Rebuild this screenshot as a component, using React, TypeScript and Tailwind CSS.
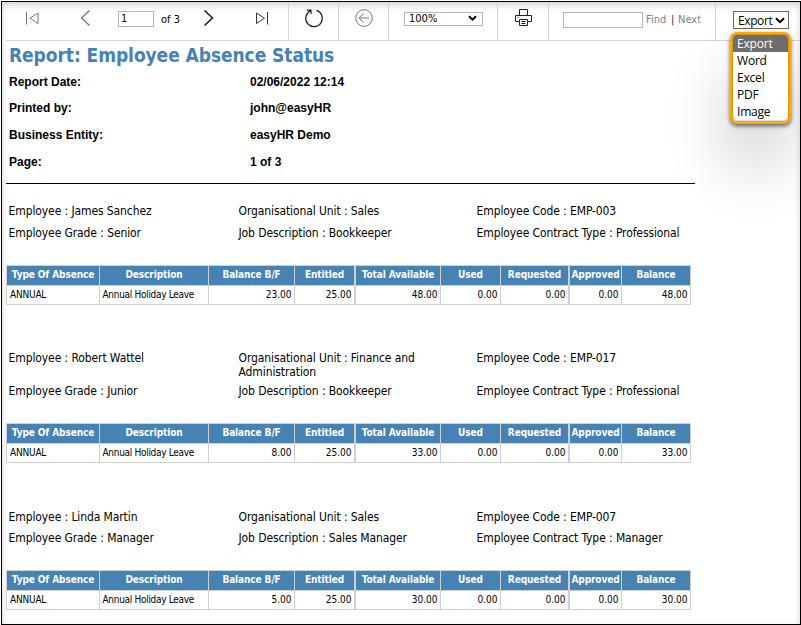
import type { ReactNode } from "react";

const tahoma = "font-['DejaVu_Sans_Condensed','DejaVu_Sans',sans-serif] [font-stretch:75%]";

interface Absence {
  name: string;
  grade: string;
  unit: string;
  job: string;
  code: string;
  contract: string;
  balances: string[];
  metaClass: string;
  gapClass: string;
}

const employees: Absence[] = [
  {
    name: "James Sanchez", grade: "Senior", unit: "Sales", job: "Bookkeeper", code: "EMP-003", contract: "Professional",
    balances: ["23.00", "25.00", "48.00", "0.00", "0.00", "0.00", "48.00"],
    metaClass: "h-[61px] grid-rows-[22px_14px]", gapClass: "h-[46px]",
  },
  {
    name: "Robert Wattel", grade: "Junior", unit: "Finance and Administration", job: "Bookkeeper", code: "EMP-017", contract: "Professional",
    balances: ["8.00", "25.00", "33.00", "0.00", "0.00", "0.00", "33.00"],
    metaClass: "h-[72px] grid-rows-[33px_14px]", gapClass: "h-[47px]",
  },
  {
    name: "Linda Martin", grade: "Manager", unit: "Sales", job: "Sales Manager", code: "EMP-007", contract: "Manager",
    balances: ["5.00", "25.00", "30.00", "0.00", "0.00", "0.00", "30.00"],
    metaClass: "h-[60px] grid-rows-[21px_14px]", gapClass: "h-0",
  },
];

const columns = [
  { label: "Type Of Absence", cls: "w-[92px] mr-px" },
  { label: "Description", cls: "w-[108px] mr-px" },
  { label: "Balance B/F", cls: "w-[85px] mr-px" },
  { label: "Entitled", cls: "w-[59px] mr-[2px]" },
  { label: "Total Available", cls: "w-[84px] mr-px" },
  { label: "Used", cls: "w-[59px] mr-px" },
  { label: "Requested", cls: "w-[67px] mr-[2px]" },
  { label: "Approved", cls: "w-[51px] mr-px" },
  { label: "Balance", cls: "w-[68px]" },
];

function Cell({ className, children }: { className: string; children?: ReactNode }) {
  return <div className={`flex h-[38px] shrink-0 items-center border-r border-[#d6d6d6] ${className}`}>{children}</div>;
}

function Toolbar() {
  return (
    <div className="flex h-[39px] items-start border-b border-[#d3d3d3] text-[11px]">
      <Cell className="w-[283px] pb-[7px]">
        <svg className="ml-[19px]" width="15" height="16" viewBox="0 0 15 16" fill="none" stroke="#777">
          <path d="M1.500 2v12.500M13 3v10.500L5 8.200z" />
        </svg>
        <svg className="ml-[40px]" width="11" height="18" viewBox="0 0 11 18" fill="none" stroke="#777" strokeWidth="1.3">
          <path d="M9.500 1.500L1.500 9l8 7.500" />
        </svg>
        <div className="ml-[27px] mt-[2px] flex h-[16px] w-[36px] items-center border border-[#b5b5b5] bg-white pl-[2px] pt-px">1</div>
        <span className="ml-[7px] mt-[5px] w-[20px] whitespace-nowrap">of 3</span>
        <svg className="ml-[22px]" width="11" height="18" viewBox="0 0 11 18" fill="none" stroke="#111" strokeWidth="1.4">
          <path d="M1.500 1.500L9.500 9l-8 7.500" />
        </svg>
        <svg className="ml-[41px]" width="15" height="16" viewBox="0 0 15 16" fill="none" stroke="#333">
          <path d="M1.500 3v10.500L9.500 8.200z" /><path d="M12.500 2v12.500" stroke="#33336a" />
        </svg>
      </Cell>
      <Cell className="w-[50px] justify-center pb-[7px]">
        <svg width="20" height="20" viewBox="0 0 20 20" fill="none" stroke="#222" strokeWidth="1.200">
          <path d="M12.500 2.400A8.300 8.300 0 1 1 6.500 2.800M2.800 2.200H7V6" />
        </svg>
      </Cell>
      <Cell className="w-[50px] justify-center pb-[7px]">
        <svg width="20" height="20" viewBox="0 0 20 20" fill="none" stroke="#777">
          <circle cx="10" cy="10" r="8.300" /><path d="M15 10H5.500M9.500 5.500L5 10l4.500 4.500" />
        </svg>
      </Cell>
      <Cell className="w-[109px] pb-[5px] pl-[15px]">
        <div className="flex h-[14px] w-[79px] items-center justify-between border border-[#b5b5b5] bg-white pl-[4px] pr-[5px]">
          <span className="pt-px text-[11px]">100%</span>
          <svg width="9" height="7" viewBox="0 0 9 7" fill="none" stroke="#000" strokeWidth="2"><path d="M1 1.200L4.500 4.700 8 1.200" /></svg>
        </div>
      </Cell>
      <Cell className="w-[51px] justify-center pb-[7px]">
        <svg width="19" height="19" viewBox="0 0 19 19" fill="none" stroke="#222">
          <path d="M5.500 7.500v-6h8v6M5.500 13.500h-4v-6h16v6h-4M5.500 11.500h8v6h-8zM7.500 13.500h4M7.500 15.500h4M3.500 9.500h1" />
        </svg>
      </Cell>
      <Cell className="w-[167px] pb-[3px] pl-[14px]">
        <div className="h-[16px] w-[80px] border border-[#b5b5b5] bg-white" />
        <span className="ml-[3px] mt-[2px] w-[21px] text-[#808080]">Find</span>
        <span className="ml-[4px] mt-[2px] w-[4px] text-[#224]">|</span>
        <span className="ml-[3px] mt-[2px] text-[#808080]">Next</span>
      </Cell>
      <div className="relative ml-[17px] mt-[9px] font-['Open_Sans',sans-serif] text-[12px] [font-stretch:100%]">
        <div className="flex h-[18px] w-[56px] items-center border border-[#666] bg-white pl-[4px] pt-px">
          <span className="w-[37px] tracking-[-0.4px]">Export</span>
          <svg className="mb-px" width="10" height="7" viewBox="0 0 10 7" fill="none" stroke="#000" strokeWidth="2"><path d="M1 1.200L5 5.200 9 1.200" /></svg>
        </div>
        <div className="absolute left-[-3px] top-[21px] z-10 w-[61px] rounded-[7px] border-[3px] border-[#fbab10] bg-white pb-px shadow-[0_2px_4px_rgba(0,0,0,0.6),-4px_42px_60px_rgba(0,0,0,0.18)]">
          <div className="overflow-hidden rounded-[4px] shadow-[0_0_2px_rgba(0,0,0,0.5)]">
            {["Export", "Word", "Excel", "PDF", "Image"].map((o, i) => (
              <div key={o} className={`h-[17px] pl-[4px] leading-[17px] tracking-[-0.2px] ${i === 0 ? "bg-[#6d6d6d] text-white" : ""}`}>{o}</div>
            ))}
          </div>
        </div>
      </div>
    </div>
  );
}

function Employee({ e }: { e: Absence }) {
  const cells = ["ANNUAL", "Annual Holiday Leave", ...e.balances];
  return (
    <section>
      <div className={`grid grid-cols-[230px_238px_220px] pl-[2.500px] text-[12px] leading-[14px] tracking-[-0.1px] ${e.metaClass}`}>
        <p>Employee : {e.name}</p>
        <p className="w-[200px]">Organisational Unit : {e.unit}</p>
        <p>Employee Code : {e.code}</p>
        <p>Employee Grade : {e.grade}</p>
        <p>Job Description : {e.job}</p>
        <p className="whitespace-nowrap">Employee Contract Type : {e.contract}</p>
      </div>
      <div className="w-[685px] space-y-px bg-[#d0d0d0] p-px">
        <div className="flex h-[19px] text-[10px] font-bold leading-[18px] tracking-[-0.1px] text-white">
          {columns.map((c) => <div key={c.label} className={`shrink-0 whitespace-nowrap bg-[#4682b4] text-center ${c.cls}`}>{c.label}</div>)}
        </div>
        <div className="flex h-[18px] text-[10px] leading-[18px]">
          {cells.map((v, i) => (
            <div key={i} className={`shrink-0 whitespace-nowrap bg-white ${i > 1 ? "pr-[2.500px] text-right" : i === 1 ? "pl-[2.500px] tracking-[-0.3px]" : "pl-[3px] tracking-[-0.2px]"} ${columns[i].cls}`}>{v}</div>
          ))}
        </div>
      </div>
      <div className={e.gapClass} />
    </section>
  );
}

export default function App() {
  return (
    <div className="h-[625px] w-[801px] overflow-hidden bg-white pl-px pt-px">
      <main className={`h-[624px] w-[800px] overflow-hidden border border-black bg-white pl-[4px] text-black shadow-[inset_0_3px_7px_rgba(0,0,0,0.18)] ${tahoma}`}>
        <Toolbar />
        <h1 className="mt-px h-[26px] whitespace-nowrap pl-[3px] text-[19px] font-bold leading-[26px] tracking-[-0.07px] text-[#4682b4]">Report: Employee Absence Status</h1>
        <dl className="grid h-[115px] grid-cols-[241px_1fr] grid-rows-[26px_27px_27px_27px] pl-[3px] pt-[6px] font-['Liberation_Sans',sans-serif] text-[12px] font-bold leading-[16px]">
          <dt>Report Date:</dt><dd>02/06/2022 12:14</dd>
          <dt>Printed by:</dt><dd>john@easyHR</dd>
          <dt>Business Entity:</dt><dd>easyHR Demo</dd>
          <dt>Page:</dt><dd>1 of 3</dd>
        </dl>
        <div className="mb-[20px] h-px w-[689px] bg-black" />
        {employees.map((e) => <Employee key={e.code} e={e} />)}
      </main>
    </div>
  );
}
